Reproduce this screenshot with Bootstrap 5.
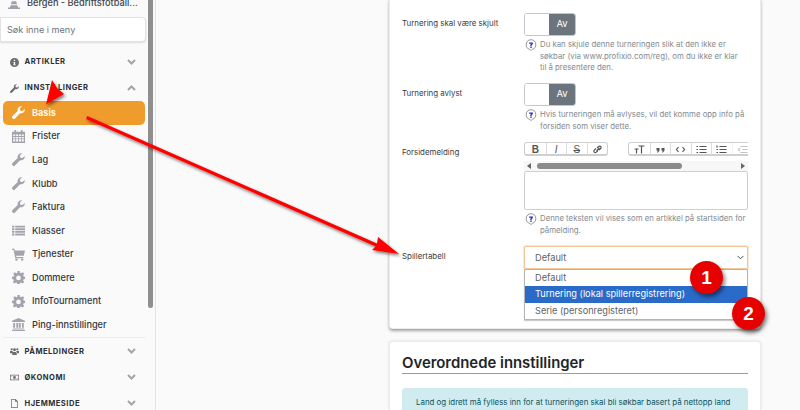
<!DOCTYPE html>
<html lang="no">
<head>
<meta charset="UTF-8">
<title>Basis</title>
<link href="https://cdn.jsdelivr.net/npm/bootstrap@5.3.0/dist/css/bootstrap.min.css" rel="stylesheet">
<style>
html, body { height: 410px; overflow: hidden; }
body { background: #fafafa; font-family: Inter, "Liberation Sans", sans-serif; font-size: 10px; color: #343a40; position: relative; width: 800px; }
.side-wrap { width: 156px; height: 410px; overflow: hidden; flex: none; background: #fafafa; border-right: 1px solid #e4e4e4; }
.side-col { width: 146px; flex: none; padding-left: 3px; }
.side-bar { width: 5.5px; margin-left: 1.5px; height: 308px; background: #8f8f8f; border-radius: 0 0 3px 3px; flex: none; }
.org-line { margin-top: -6px; height: 18px; padding-left: 5px; font-size: 9.2px; font-weight: 500; color: #3c4248; white-space: nowrap; }
.org-line svg { width: 12px; height: 12px; margin-right: 7px; fill: #a0a0a8; flex: none; }
.menu-search { margin: 5px 0 0 -3px; height: 25px; width: 146px; background: #fff; border: 1px solid #e2e2e2; border-radius: 0 4px 4px 0; box-shadow: 0 1px 2px rgba(0,0,0,.12); padding-left: 6px; font-size: 9.15px; color: #6c757d; }
.menu-head { height: 26px; padding: 0 10px 0 7px; font-size: 7.6px; font-weight: 700; letter-spacing: .48px; color: #2b3035; }
.menu-head svg.ico { width: 9px; height: 9px; fill: #6d6d75; margin-right: 5.5px; flex: none; }
.menu-head svg.chev { width: 9px; height: 6px; margin-left: auto; fill: none; stroke: #a3a3ab; stroke-width: 2; }
.menu-head-first { margin-top: 7px; }
.menu-item { height: 23.55px; padding-left: 9px; font-size: 9.2px; font-weight: 500; color: #33383d; }
.menu-item svg { width: 13px; height: 13px; fill: #a3a3ad; margin-right: 7px; flex: none; }
.menu-item.sel { background: #f09c2c; color: #fff; border-radius: 5px; font-weight: 600; margin-right: 1px; }
.menu-item.sel svg { fill: #fff; }
.menu-rule { border-top: 1px solid #eeeeee; margin-top: 1px; }
.main-col { padding-left: 233px; width: 605px; }
.set-card { width: 372px; background: #fff; border: 1px solid #ececec; border-radius: 4px; padding: 0 12px; }
.set-one { height: 332px; margin-top: -3px; padding-top: 16px; border-top: 0; box-shadow: 0 2px 3px rgba(0,0,0,.35); }
.set-two { margin-top: 12px; height: 69px; overflow: hidden; border-bottom: 0; border-radius: 4px 4px 0 0; box-shadow: 0 0 3px rgba(0,0,0,.12); padding-top: 12.5px; }
.set-label { width: 122px; flex: none; font-size: 7.9px; font-weight: 400; color: #383d42; padding-top: 4.5px; }
.set-field { width: 224px; flex: none; }
.av-toggle { width: 52px; height: 23px; border: 1px solid #c4c8cc; border-radius: 3px; overflow: hidden; }
.av-off { width: 24px; background: #fff; }
.av-on { flex: 1; background: #6c757d; color: #fff; font-size: 9.5px; }
.help-line { margin-top: 3px; font-size: 7.8px; line-height: 11.6px; color: #848a90; padding-left: 16px; position: relative; }
.help-line svg { position: absolute; left: 1px; top: 0; width: 12px; height: 12px; }
.row-gap-one { height: 70px; }
.row-gap-two { height: 59px; }
.tool-strip { height: 14px; overflow: hidden; gap: 20px; white-space: nowrap; }
.tool-grp { border: 1px solid #cfcfcf; border-bottom-width: 2px; border-radius: 3px; height: 14px; flex: none; }
.tool-btn { width: 20.5px; height: 12px; border-left: 1px solid #dcdcdc; font: 700 10px "Liberation Sans", sans-serif; color: #555; }
.tool-btn:first-child { border-left: 0; }
.tool-btn i, .tool-btn s { font-weight: 400; }
.tool-btn svg { width: 11px; height: 9px; fill: none; stroke: #555; stroke-width: 1.2; }
.tool-btn svg.solid-ico { fill: #555; stroke: none; }
.tool-fade { opacity: .35; }
.h-scroll { height: 10px; margin-top: 5px; background: #f7f7f7; padding: 0 3px; }
.h-thumb { width: 145px; height: 6px; background: #8b8b8b; border-radius: 3px; margin: 0 4px 0 6px; }
.h-arrow-l { border: 3px solid transparent; border-left: 0; border-right: 4px solid #666; }
.h-arrow-r { border: 3px solid transparent; border-right: 0; border-left: 4px solid #666; margin-left: auto; }
.edit-box { height: 39px; background: #fff; border: 1px solid #cfcfcf; border-radius: 2px; }
.pick-row { margin-top: 10px; }
.pick-wrap { position: relative; }
.pick-select.form-select { height: 23px; padding: 0 0 0 10px; font-size: 9.2px; color: #5c636a; border-color: #f3c795; border-radius: 2px; box-shadow: 0 0 0 1px #fae5cd; background-size: 9px 7px; background-position: right 2px center; }
.pick-list { position: absolute; left: 0; right: 0; top: 23px; background: #fff; border: 1px solid #b5b5b5; box-shadow: 0 1px 1px rgba(0,0,0,.2); font-size: 9.2px; color: #5c636a; }
.pick-opt { height: 16.3px; padding-left: 10px; line-height: 16.3px; }
.pick-opt.on { background: #2a6bca; color: #fff; }
.card-title-x { font-size: 14.9px; font-weight: 600; color: #212529; margin: 0; padding-bottom: 1px; border-bottom: 1px solid #9b9b9b; line-height: 17px; }
.info-box { margin-top: 14px; height: 60px; padding: 8px 14px; background: #d1ecf1; border-radius: 3px; color: #0c5460; font-size: 7.9px; line-height: 13px; }
.over-lay { position: absolute; left: 0; top: 0; pointer-events: none; }
.num-dot { position: absolute; width: 33px; height: 33px; border-radius: 50%; background: #e60000; color: #fff; font: 700 19px "Liberation Sans", sans-serif; box-shadow: 2px 3px 4px rgba(0,0,0,.5); }
.num-one { left: 690px; top: 261px; }
.num-two { left: 732px; top: 297px; }
</style>
</head>
<body>
<svg width="0" height="0" class="position-absolute">
  <defs>
    <symbol id="i-wrench" viewBox="0 0 16 16"><path d="M15.6 3.6c.3 1.500-.1 3.100-1.300 4.200-1.200 1.200-2.900 1.600-4.500 1.200L3.700 15.300c-.9.900-2.200.9-3 .1-.9-.9-.9-2.200 0-3.100L7 6.200C6.500 4.600 6.900 2.900 8.100 1.700 9.300.5 10.900.1 12.400.4L9.700 3.100l.5 2.700 2.700.5z"/></symbol>
    <symbol id="i-cal" viewBox="0 0 16 16"><path d="M3 0h2v2h6V0h2v2h3v14H0V2h3zM1.500 5.500v2h2.500v-2zm3.500 0v2h2.500v-2zm3.500 0v2H11v-2zm3.500 0v2h2.500v-2zM1.500 8.500v2h2.500v-2zm3.500 0v2h2.500v-2zm3.500 0v2H11v-2zm3.500 0v2h2.500v-2zM1.500 11.500v2.500h2.500v-2.500zm3.500 0v2.500h2.500v-2.500zm3.500 0v2.500H11v-2.500zm3.500 0v2.500h2.500v-2.500z" fill-rule="evenodd"/></symbol>
    <symbol id="i-list" viewBox="0 0 16 16"><path d="M0 2h3v2.300H0zm4 0h12v2.300H4zM0 5.200h3v2.300H0zm4 0h12v2.300H4zM0 8.400h3v2.300H0zm4 0h12v2.300H4zM0 11.700h3V14H0zm4 0h12V14H4z"/></symbol>
    <symbol id="i-cart" viewBox="0 0 16 16"><path d="M0 1h3l.5 2H16l-1.500 6.500H5l.4 1.500H14v1.500H4L2 2.500H0z"/><circle cx="5.500" cy="14.300" r="1.500"/><circle cx="12.500" cy="14.300" r="1.500"/></symbol>
    <symbol id="i-gear" viewBox="0 0 16 16"><path fill-rule="evenodd" d="M6.600 0h2.800l.4 2.200 1.300.6L13 1.500l2 2-1.300 1.900.6 1.300 2.200.4v2.800l-2.200.4-.6 1.300 1.300 1.900-2 2-1.900-1.300-1.300.6-.4 2.200H6.600l-.4-2.200-1.300-.6L3 15.500l-2-2 1.300-1.900-.6-1.300L0 9.900V7.100l2.200-.4.6-1.300L1.500 3.500l2-2 1.900 1.300 1.300-.6zM8 5.600a2.900 2.900 0 1 0 0 5.800 2.900 2.900 0 0 0 0-5.800z"/></symbol>
    <symbol id="i-bank" viewBox="0 0 16 16"><path d="M8 0l8 3.500V5H0V3.500zM1.500 6h2.300v6H1.500zm3.800 0h2.300v6H5.300zm3.100 0h2.300v6H8.400zm3.800 0h2.300v6h-2.300zM1 13h14v1.300H1zM0 14.800h16V16H0z"/></symbol>
    <symbol id="i-info" viewBox="0 0 16 16"><path fill-rule="evenodd" d="M8 0a8 8 0 1 1 0 16A8 8 0 0 1 8 0zM6.800 3v2.500h2.400V3zM5.800 7v1.500h1v3h-1V13h4.400v-1.500h-1V7z"/></symbol>
    <symbol id="i-users" viewBox="0 0 16 16"><circle cx="3" cy="4" r="2"/><circle cx="13" cy="4" r="2"/><circle cx="8" cy="5" r="2.600"/><path d="M0 7h4l1 1v3H0zM16 7h-4l-1 1v3h5zM4 9h8v5H4z"/></symbol>
    <symbol id="i-money" viewBox="0 0 16 16"><path fill-rule="evenodd" d="M0 3h16v10H0zM1.300 4.300v7.400h13.400V4.300z"/><path d="M8 5.500a2.500 2.500 0 1 0 0 5 2.500 2.500 0 0 0 0-5zM3 5.500h1.500L3 7zM13 10.500h-1.500L13 9z"/></symbol>
    <symbol id="i-file" viewBox="0 0 16 16"><path fill-rule="evenodd" d="M2 0h8l4 4v12H2zM3.300 1.300v13.400h9.400V5H9V1.300z"/></symbol>
    <symbol id="i-help" viewBox="0 0 16 16"><path d="M8 1a6.500 6.500 0 0 1 1.500 12.800L8 15.500l-1.500-1.700A6.500 6.500 0 0 1 8 1z" fill="#fff" stroke="#777" stroke-width="1"/><path d="M5.500 4.500h5v2.300L8.900 8v1.500H7.100V7.300l1.600-1H5.500zM7.100 10.300h1.800V12H7.100z" fill="#2b2bb8"/></symbol>
  </defs>
</svg>

<div class="d-flex">
  <aside class="side-wrap d-flex">
    <div class="side-col">
      <div class="org-line d-flex align-items-center"><svg viewBox="0 0 16 16"><path d="M6.500 0h3l1 4h-5zM5 5.500h6l1 4H4zM3.500 11h9l1 3H16v2H0v-2h2.500z"/></svg>Bergen - Bedriftsfotball...</div>
      <div class="menu-search d-flex align-items-center">Søk inne i meny</div>
      <div class="menu-head menu-head-first d-flex align-items-center"><svg class="ico"><use href="#i-info"/></svg>ARTIKLER<svg class="chev" viewBox="0 0 9 6"><path d="M1 1l3.500 3.500L8 1"/></svg></div>
      <div class="menu-head d-flex align-items-center"><svg class="ico"><use href="#i-wrench"/></svg>INNSTILLINGER<svg class="chev" viewBox="0 0 9 6"><path d="M1 5l3.500-3.500L8 5"/></svg></div>
      <div class="menu-item sel d-flex align-items-center"><svg><use href="#i-wrench"/></svg>Basis</div>
      <div class="menu-item d-flex align-items-center"><svg><use href="#i-cal"/></svg>Frister</div>
      <div class="menu-item d-flex align-items-center"><svg><use href="#i-wrench"/></svg>Lag</div>
      <div class="menu-item d-flex align-items-center"><svg><use href="#i-wrench"/></svg>Klubb</div>
      <div class="menu-item d-flex align-items-center"><svg><use href="#i-wrench"/></svg>Faktura</div>
      <div class="menu-item d-flex align-items-center"><svg><use href="#i-list"/></svg>Klasser</div>
      <div class="menu-item d-flex align-items-center"><svg><use href="#i-cart"/></svg>Tjenester</div>
      <div class="menu-item d-flex align-items-center"><svg><use href="#i-gear"/></svg>Dommere</div>
      <div class="menu-item d-flex align-items-center"><svg><use href="#i-gear"/></svg>InfoTournament</div>
      <div class="menu-item d-flex align-items-center"><svg><use href="#i-bank"/></svg>Ping-innstillinger</div>
      <div class="menu-rule"></div>
      <div class="menu-head d-flex align-items-center"><svg class="ico"><use href="#i-users"/></svg>PÅMELDINGER<svg class="chev" viewBox="0 0 9 6"><path d="M1 1l3.500 3.500L8 1"/></svg></div>
      <div class="menu-head d-flex align-items-center"><svg class="ico"><use href="#i-money"/></svg>ØKONOMI<svg class="chev" viewBox="0 0 9 6"><path d="M1 1l3.500 3.500L8 1"/></svg></div>
      <div class="menu-head d-flex align-items-center"><svg class="ico"><use href="#i-file"/></svg>HJEMMESIDE<svg class="chev" viewBox="0 0 9 6"><path d="M1 1l3.500 3.500L8 1"/></svg></div>
    </div>
    <div class="side-bar"></div>
  </aside>

  <main class="main-col">
    <section class="set-card set-one">
      <div class="d-flex row-gap-one">
        <div class="set-label">Turnering skal være skjult</div>
        <div class="set-field">
          <div class="av-toggle d-flex"><div class="av-off"></div><div class="av-on d-flex align-items-center justify-content-center">Av</div></div>
          <div class="help-line"><svg><use href="#i-help"/></svg>Du kan skjule denne turneringen slik at den ikke er søkbar (via www.profixio.com/reg), om du ikke er klar<br>til å presentere den.</div>
        </div>
      </div>
      <div class="d-flex row-gap-two">
        <div class="set-label">Turnering avlyst</div>
        <div class="set-field">
          <div class="av-toggle d-flex"><div class="av-off"></div><div class="av-on d-flex align-items-center justify-content-center">Av</div></div>
          <div class="help-line"><svg><use href="#i-help"/></svg>Hvis turneringen må avlyses, vil det komme opp info på forsiden som viser dette.</div>
        </div>
      </div>
      <div class="d-flex">
        <div class="set-label">Forsidemelding</div>
        <div class="set-field">
          <div class="tool-strip d-flex">
            <div class="tool-grp d-flex">
              <div class="tool-btn d-flex align-items-center justify-content-center">B</div>
              <div class="tool-btn d-flex align-items-center justify-content-center"><i>I</i></div>
              <div class="tool-btn d-flex align-items-center justify-content-center"><s>S</s></div>
              <div class="tool-btn d-flex align-items-center justify-content-center"><svg viewBox="0 0 10 9"><path d="M4 6l3-3M3.500 3.500L1.800 5.200a1.400 1.400 0 0 0 2 2L5.500 5.500M4.500 3L6.200 1.500a1.400 1.400 0 0 1 2 2L6.500 5.200"/></svg></div>
            </div>
            <div class="tool-grp d-flex">
              <div class="tool-btn d-flex align-items-center justify-content-center"><svg viewBox="0 0 10 9"><path d="M0 4h4M2 4v4.500M4 1h6M7 1v7.500"/></svg></div>
              <div class="tool-btn d-flex align-items-center justify-content-center"><svg class="solid-ico" viewBox="0 0 10 9"><path d="M1 3h3v2.500L2.500 7.500H1.500l.7-2H1zM6 3h3v2.500L7.500 7.500H6.500l.7-2H6z"/></svg></div>
              <div class="tool-btn d-flex align-items-center justify-content-center"><svg viewBox="0 0 10 9"><path d="M3 2L1 4.500 3 7M7 2l2 2.500L7 7"/></svg></div>
              <div class="tool-btn d-flex align-items-center justify-content-center"><svg viewBox="0 0 10 9"><path d="M3 1.500h7M3 4.500h7M3 7.500h7M0 1.500h1.500M0 4.500h1.500M0 7.500h1.500"/></svg></div>
              <div class="tool-btn d-flex align-items-center justify-content-center"><svg viewBox="0 0 10 9"><path d="M3 1.500h7M3 4.500h7M3 7.500h7M.5 .5v2M0 4.500h1.500M0 7.500h1.500"/></svg></div>
              <div class="tool-btn tool-fade d-flex align-items-center justify-content-center"><svg viewBox="0 0 10 9"><path d="M3 1.500h7M5 4.500h5M3 7.500h7M2.500 3L1 4.500 2.500 6"/></svg></div>
            </div>
          </div>
          <div class="h-scroll d-flex align-items-center"><span class="h-arrow-l"></span><span class="h-thumb"></span><span class="h-arrow-r"></span></div>
          <div class="edit-box"></div>
          <div class="help-line"><svg><use href="#i-help"/></svg>Denne teksten vil vises som en artikkel på startsiden for påmelding.</div>
        </div>
      </div>
      <div class="d-flex pick-row">
        <div class="set-label">Spillertabell</div>
        <div class="set-field pick-wrap">
          <select class="form-select pick-select"><option>Default</option></select>
          <div class="pick-list">
            <div class="pick-opt">Default</div>
            <div class="pick-opt on">Turnering (lokal spillerregistrering)</div>
            <div class="pick-opt">Serie (personregisteret)</div>
          </div>
        </div>
      </div>
    </section>
    <section class="set-card set-two">
      <h2 class="card-title-x">Overordnede innstillinger</h2>
      <div class="info-box">Land og idrett må fylless inn for at turneringen skal bli søkbar basert på nettopp land og idrett.</div>
    </section>
  </main>
</div>

<svg class="over-lay" width="800" height="410" viewBox="0 0 800 410">
  <defs><filter id="sh" x="-20%" y="-20%" width="140%" height="140%"><feDropShadow dx="1.500" dy="2" stdDeviation="1.500" flood-color="#000" flood-opacity=".5"/></filter></defs>
  <g filter="url(#sh)" fill="#f00">
    <path d="M46 104.500L52 80 57 88 64 94z"/>
    <path d="M87.300 116L377 243.500 378 237 399 254 372 250 375.500 246.500 86 119z"/>
  </g>
</svg>
<div class="num-dot num-one d-flex align-items-center justify-content-center">1</div>
<div class="num-dot num-two d-flex align-items-center justify-content-center">2</div>
<script src="https://cdn.jsdelivr.net/npm/bootstrap@5.3.0/dist/js/bootstrap.bundle.min.js"></script>
</body>
</html>
